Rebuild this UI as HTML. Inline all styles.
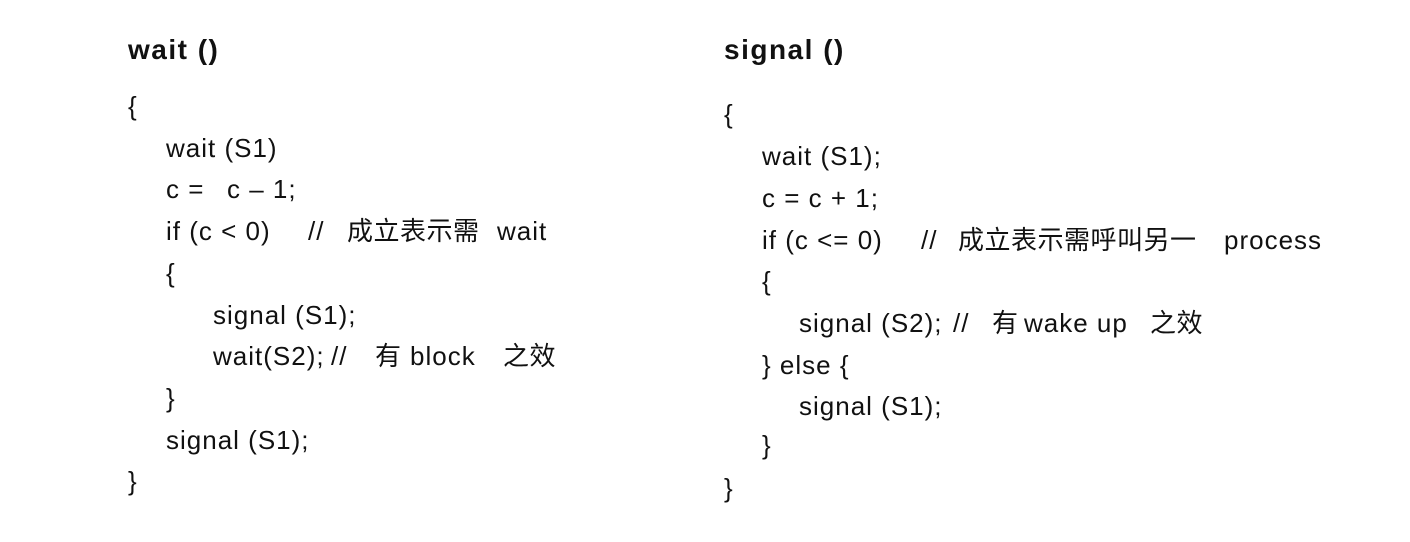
<!DOCTYPE html>
<html><head><meta charset="utf-8"><style>
body{margin:0;width:1410px;height:542px;background:#fff;position:relative;overflow:hidden;font-family:"Liberation Sans","Noto Sans CJK TC",sans-serif;color:#111;}
div{position:absolute;white-space:pre;font-size:26px;line-height:28px;letter-spacing:1px;}
.t{font-weight:bold;font-size:28px;letter-spacing:1.5px;}
.c{letter-spacing:0.5px;}
</style></head><body>
<div class="t" style="left:128px;top:36px">wait ()</div>
<div style="left:128px;top:92px">{</div>
<div style="left:166px;top:134px">wait (S1)</div>
<div style="left:166px;top:175px">c =</div><div style="left:227px;top:175px">c – 1;</div>
<div style="left:166px;top:217px">if (c &lt; 0)</div>
<div style="left:308px;top:217px">//</div>
<div class="c" style="left:347px;top:217px">成立表示需</div>
<div style="left:497px;top:217px">wait</div>
<div style="left:166px;top:259px">{</div>
<div style="left:213px;top:301px">signal (S1);</div>
<div style="left:213px;top:342px">wait(S2);</div>
<div style="left:331px;top:342px">//</div>
<div class="c" style="left:375px;top:342px">有</div>
<div style="left:410px;top:342px">block</div>
<div class="c" style="left:503px;top:342px">之效</div>
<div style="left:166px;top:384px">}</div>
<div style="left:166px;top:426px">signal (S1);</div>
<div style="left:128px;top:467px">}</div>

<div class="t" style="left:724px;top:36px">signal ()</div>
<div style="left:724px;top:100px">{</div>
<div style="left:762px;top:142px">wait (S1);</div>
<div style="left:762px;top:184px">c = c + 1;</div>
<div style="left:762px;top:226px">if (c &lt;= 0)</div>
<div style="left:921px;top:226px">//</div>
<div class="c" style="left:958px;top:226px">成立表示需呼叫另一</div>
<div style="left:1224px;top:226px">process</div>
<div style="left:762px;top:267px">{</div>
<div style="left:799px;top:309px">signal (S2);</div>
<div style="left:953px;top:309px">//</div>
<div class="c" style="left:992px;top:309px">有</div>
<div style="left:1024px;top:309px">wake up</div>
<div class="c" style="left:1150px;top:309px">之效</div>
<div style="left:762px;top:351px">} else {</div>
<div style="left:799px;top:392px">signal (S1);</div>
<div style="left:762px;top:431px">}</div>
<div style="left:724px;top:474px">}</div>
</body></html>
